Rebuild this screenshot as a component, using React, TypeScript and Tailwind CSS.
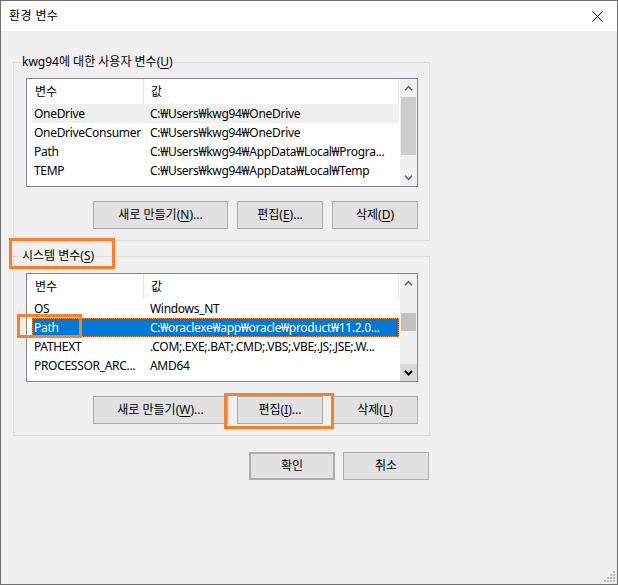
type Row = { name: string; value: string; state?: 'hot' | 'selected' }

const userRows: Row[] = [
  { name: 'OneDrive', value: 'C:₩Users₩kwg94₩OneDrive', state: 'hot' },
  { name: 'OneDriveConsumer', value: 'C:₩Users₩kwg94₩OneDrive' },
  { name: 'Path', value: 'C:₩Users₩kwg94₩AppData₩Local₩Progra...' },
  { name: 'TEMP', value: 'C:₩Users₩kwg94₩AppData₩Local₩Temp' },
]

const systemRows: Row[] = [
  { name: 'OS', value: 'Windows_NT' },
  { name: 'Path', value: 'C:₩oraclexe₩app₩oracle₩product₩11.2.0...', state: 'selected' },
  { name: 'PATHEXT', value: '.COM;.EXE;.BAT;.CMD;.VBS;.VBE;.JS;.JSE;.W...' },
  { name: 'PROCESSOR_ARC...', value: 'AMD64' },
]

function Chevron({ up, dark }: { up?: boolean; dark?: boolean }) {
  return (
    <svg width="9" height="6" viewBox="0 0 9 6" className={dark ? 'text-black' : 'text-[#606060]'}>
      <path
        d={up ? 'M1 5.2 L4.5 1.5 L8 5.2' : 'M1 0.8 L4.5 4.5 L8 0.8'}
        fill="none"
        stroke="currentColor"
        strokeWidth={dark ? 1.9 : 1.5}
      />
    </svg>
  )
}

function ScrollBar({ thumb, downHot }: { thumb: string; downHot?: boolean }) {
  return (
    <div className="flex w-[17px] shrink-0 flex-col bg-[#f0f0f0]">
      <div className="flex h-[17px] items-center justify-center">
        <Chevron up />
      </div>
      <div className="flex-1">
        <div className={thumb} />
      </div>
      <div className={'flex h-[17px] items-center justify-center ' + (downHot ? 'bg-[#dadada]' : '')}>
        <Chevron dark={downHot} />
      </div>
    </div>
  )
}

function ListView({ rows, thumb, downHot, className }: { rows: Row[]; thumb: string; downHot?: boolean; className: string }) {
  return (
    <div className={'flex h-[109px] border border-[#828790] bg-white ' + className}>
      <div className="flex min-w-0 flex-1 flex-col overflow-hidden pl-[5px] pr-px">
        <div className="flex h-[25px] shrink-0">
          <div className="flex w-[112px] items-center border-r border-[#e5e5e5] pl-[3px]">변수</div>
          <div className="flex flex-1 items-center border-r border-[#e5e5e5] pl-[7px]">값</div>
        </div>
        {rows.map((r) => (
          <div
            key={r.name}
            className={
              'flex h-[19px] shrink-0 items-center whitespace-nowrap tracking-[-0.3px] ' +
              (r.state === 'selected'
                ? 'bg-[#0078d7] text-white outline-1 outline-dotted -outline-offset-1 outline-[#ff8728]'
                : r.state === 'hot'
                  ? 'bg-[#f0f0f0]'
                  : '')
            }
          >
            <div className="w-[111px] shrink-0 overflow-hidden pl-[2px]">{r.name}</div>
            <div className="min-w-0 flex-1 overflow-hidden pl-[7px]">{r.value}</div>
          </div>
        ))}
      </div>
      <ScrollBar thumb={thumb} downHot={downHot} />
    </div>
  )
}

function Btn({ children, className }: { children: React.ReactNode; className: string }) {
  return (
    <div className={'flex h-[28px] items-center justify-center border border-[#adadad] bg-[#e1e1e1] ' + className}>
      {children}
    </div>
  )
}

function U({ children }: { children: React.ReactNode }) {
  return <span className="underline underline-offset-2">{children}</span>
}

export default function App() {
  return (
    <div className="relative h-[585px] w-[618px] overflow-hidden border border-[#6e6e6e] bg-[#f0f0f0] font-['Noto_Sans','Noto_Sans_CJK_KR',sans-serif] text-[12px] leading-4 text-black">
      {/* title bar */}
      <div className="flex h-[30px] items-center justify-between bg-white pl-2 pr-[14px]">
        <span className="text-[12px] tracking-[0.4px]">환경 변수</span>
        <svg width="11" height="11" viewBox="0 0 11 11">
          <path d="M0.5 0.5 L10.5 10.5 M10.5 0.5 L0.5 10.5" stroke="#000" strokeWidth="1" />
        </svg>
      </div>

      <div className="pl-[12px]">
        <fieldset className="mt-[23px] w-[417px] border border-[#dcdcdc]">
          <legend className="ml-[7px] px-px leading-4">
            kwg94에 대한 사용자 변수(<U>U</U>)
          </legend>
          <div className="pr-[11px] pb-[11px] pl-[12px]">
            <ListView rows={userRows} thumb="mx-px mt-px h-[58px] bg-[#cdcdcd]" className="mt-2" />
            <div className="mt-[14px] flex justify-end gap-[9px]">
              <Btn className="w-[135px]">
                새로 만들기(<U>N</U>)...
              </Btn>
              <Btn className="w-[86px]">
                편집(<U>E</U>)...
              </Btn>
              <Btn className="w-[86px]">
                삭제(<U>D</U>)
              </Btn>
            </div>
          </div>
        </fieldset>

        <fieldset className="mt-[7px] w-[417px] border border-[#dcdcdc]">
          <legend className="ml-[7px] px-px leading-4">
            시스템 변수(<U>S</U>)
          </legend>
          <div className="pr-[11px] pb-[11px] pl-[12px]">
            <ListView rows={systemRows} thumb="mx-px mt-[22px] h-[18px] bg-[#c1c1c1]" downHot className="mt-[9px]" />
            <div className="mt-[14px] flex justify-end gap-[9px]">
              <Btn className="w-[135px]">
                새로 만들기(<U>W</U>)...
              </Btn>
              <Btn className="w-[86px]">
                편집(<U>I</U>)...
              </Btn>
              <Btn className="w-[86px]">
                삭제(<U>L</U>)
              </Btn>
            </div>
          </div>
        </fieldset>

        <div className="mt-[16px] flex w-[417px] justify-end gap-[8px] pr-px">
          <Btn className="w-[86px] border-2 border-[#0078d7]">확인</Btn>
          <Btn className="w-[86px]">취소</Btn>
        </div>
      </div>

      {/* resize grip */}
      <svg className="absolute right-[2px] bottom-[2px]" width="12" height="12" viewBox="0 0 12 12">
        {[
          [10, 2],
          [7, 5],
          [10, 5],
          [4, 8],
          [7, 8],
          [10, 8],
          [1, 11],
          [4, 11],
          [7, 11],
          [10, 11],
        ].map(([x, y]) => (
          <rect key={x + '-' + y} x={x} y={y - 1} width="2" height="2" fill="#bcbcbc" />
        ))}
      </svg>

      {/* orange annotation boxes */}
      <div className="absolute top-[237px] left-[8px] h-[31px] w-[106px] border-[3px] border-[#ff7f27]" />
      <div className="absolute top-[313px] left-[16px] h-[24px] w-[65px] border-[3px] border-[#ff7f27]" />
      <div className="absolute top-[392px] left-[223px] h-[36px] w-[110px] border-[3px] border-[#ff7f27]" />
    </div>
  )
}
